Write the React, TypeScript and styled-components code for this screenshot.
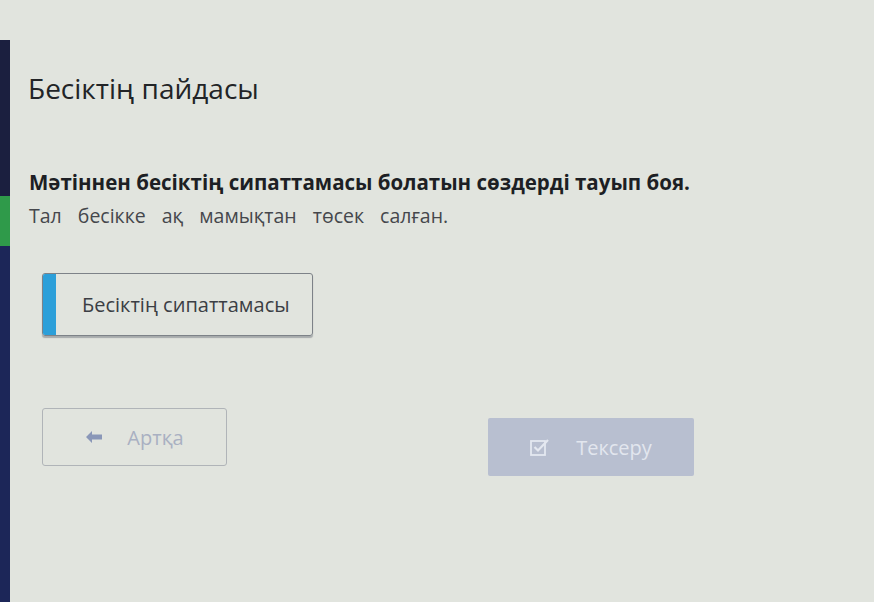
import React from 'react';
import styled, { createGlobalStyle } from 'styled-components';

const GlobalStyle = createGlobalStyle`
  html, body {
    margin: 0;
    padding: 0;
    background: #e1e4de;
  }
  body {
    font-family: "Open Sans", "Noto Sans", sans-serif;
  }
`;

const App = () => {
  return (
    <>
      <GlobalStyle />
      <Page>
        <SideStrip>
          <StripPart $color="#e1e4de" $height={40} />
          <StripPart $color="#1b1f3f" $height={156} />
          <StripPart $color="#2f9a4a" $height={50} />
          <StripPart $color="#1c2658" $grow />
        </SideStrip>
        <Content>
          <Title>Бесіктің пайдасы</Title>
          <Question>Мәтіннен бесіктің сипаттамасы болатын сөздерді тауып боя.</Question>
          <Sentence>Тал бесікке ақ мамықтан төсек салған.</Sentence>
          <AnswerCard>
            <AnswerMark />
            <AnswerText>Бесіктің сипаттамасы</AnswerText>
          </AnswerCard>
          <Actions>
            <BackButton>
              <svg width="18" height="14" viewBox="0 0 18 14">
                <path d="M7 1 L1 7 L7 13 L7 9.5 L17 9.5 L17 4.5 L7 4.5 Z" fill="#8a97b8" />
              </svg>
              <span>Артқа</span>
            </BackButton>
            <CheckButton>
              <svg width="20" height="18" viewBox="0 0 20 18">
                <rect x="1" y="3" width="14" height="14" fill="none" stroke="#e4e8f0" strokeWidth="1.8" />
                <path d="M4.5 9 L8 12.5 L18 2" fill="none" stroke="#e4e8f0" strokeWidth="2.2" />
              </svg>
              <span>Тексеру</span>
            </CheckButton>
          </Actions>
        </Content>
      </Page>
    </>
  );
};

export default App;

const Page = styled.div`
  display: flex;
  width: 874px;
  height: 602px;
  overflow: hidden;
  background: #e1e4de;
`;

const SideStrip = styled.div`
  width: 10px;
  display: flex;
  flex-direction: column;
`;

const StripPart = styled.div<{ $color: string; $height?: number; $grow?: boolean }>`
  background: ${(p) => p.$color};
  height: ${(p) => (p.$height ? `${p.$height}px` : 'auto')};
  flex: ${(p) => (p.$grow ? 1 : 'none')};
`;

const Content = styled.div`
  flex: 1;
  display: flex;
  flex-direction: column;
  padding: 68px 0 0 18px;
`;

const Title = styled.h1`
  margin: 0;
  font-size: 28px;
  font-weight: 400;
  color: #222427;
  line-height: 40px;
`;

const Question = styled.div`
  margin-top: 61px;
  font-size: 20.5px;
  font-weight: 700;
  color: #1d1f24;
  line-height: 26px;
  padding-left: 1px;
`;

const Sentence = styled.div`
  margin-top: 8px;
  font-size: 19.5px;
  color: #45474c;
  word-spacing: 11px;
  line-height: 26px;
  padding-left: 1px;
`;

const AnswerCard = styled.div`
  margin: 44px 0 0 14px;
  width: 271px;
  height: 63px;
  display: flex;
  align-items: center;
  border: 1px solid #7d8288;
  border-radius: 3px;
  box-shadow: 0 2px 1px rgba(60, 66, 80, 0.35);
  box-sizing: border-box;
  overflow: hidden;
`;

const AnswerMark = styled.div`
  width: 13px;
  align-self: stretch;
  background: #2c9fd9;
`;

const AnswerText = styled.div`
  margin-left: 26px;
  font-size: 20px;
  color: #3b3e44;
`;

const Actions = styled.div`
  display: flex;
  align-items: flex-start;
  gap: 261px;
  margin: 72px 0 0 14px;
`;

const ButtonBase = styled.div`
  display: flex;
  align-items: center;
  justify-content: center;
  gap: 24px;
  font-size: 20px;
  box-sizing: border-box;
`;

const BackButton = styled(ButtonBase)`
  width: 185px;
  height: 58px;
  border: 1px solid #b0b4b8;
  border-radius: 3px;
  color: #a9b0c2;
`;

const CheckButton = styled(ButtonBase)`
  margin-top: 10px;
  width: 206px;
  height: 58px;
  background: #b8bfd0;
  border-radius: 2px;
  color: #e2e6ee;
  gap: 26px;
`;
